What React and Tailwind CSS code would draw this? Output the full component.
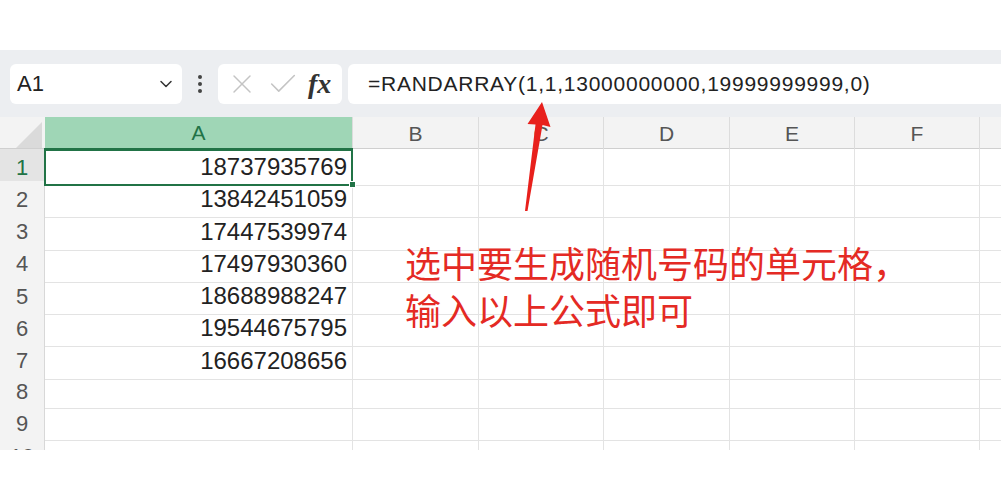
import { ChevronDown, X, Check } from 'lucide-react';

const rows = [
  '18737935769',
  '13842451059',
  '17447539974',
  '17497930360',
  '18688988247',
  '19544675795',
  '16667208656',
  '',
  '',
  '',
];

const columns = ['B', 'C', 'D', 'E', 'F', ''];

function Toolbar() {
  return (
    <div className="flex h-[67px] items-center bg-[#eceef1] pl-[10px]">
      <div className="flex h-[40px] w-[172px] items-center justify-between rounded-md bg-white pl-[7px] pr-[6px]">
        <span className="text-[22px] text-[#222]">A1</span>
        <ChevronDown size={20} strokeWidth={1.8} className="text-[#333]" />
      </div>
      <div className="flex w-[36px] flex-col items-center gap-[3px]">
        <span className="h-[4px] w-[4px] rounded-full bg-[#444]" />
        <span className="h-[4px] w-[4px] rounded-full bg-[#444]" />
        <span className="h-[4px] w-[4px] rounded-full bg-[#444]" />
      </div>
      <div className="flex h-[40px] w-[124px] items-center rounded-md bg-white pl-[8px]">
        <X size={32} strokeWidth={1.1} className="text-[#c4c4c4]" />
        <Check size={34} strokeWidth={1.1} className="ml-[8px] text-[#c4c4c4]" />
        <span className="ml-[8px] font-['Liberation_Serif',serif] text-[28px] font-bold italic leading-none text-[#333]">
          fx
        </span>
      </div>
      <div className="ml-[6px] flex h-[40px] flex-1 items-center rounded-l-md bg-white pl-[20px]">
        <span className="text-[21px] tracking-[0.75px] text-[#222]">
          =RANDARRAY(1,1,13000000000,19999999999,0)
        </span>
      </div>
    </div>
  );
}

function Sheet() {
  return (
    <div className="h-[333px] overflow-hidden">
      <div className="grid h-[32px] grid-cols-[45px_307px_126px_125px_126px_125px_125px_1fr] border-b border-[#cfcfcf] bg-[#f3f3f3]">
        <div className="relative">
          <div className="absolute bottom-[3px] right-[3px] h-0 w-0 border-b-[26px] border-l-[26px] border-b-[#dadada] border-l-transparent" />
        </div>
        <div className="flex items-center justify-center border-b-2 border-[#217346] bg-[#9fd6b6] text-[21px] text-[#217346]">
          A
        </div>
        {columns.map((c, i) => (
          <div
            key={i}
            className="flex items-center justify-center border-l border-[#dcdcdc] text-[21px] text-[#555]"
          >
            {c}
          </div>
        ))}
      </div>
      {rows.map((value, i) => (
        <div
          key={i}
          className="grid h-[32.3px] grid-cols-[45px_307px_126px_125px_126px_125px_125px_1fr]"
        >
          <div
            className={
              i === 0
                ? 'flex items-center justify-center border-b border-r border-[#d8d8d8] bg-[#e4e4e4] text-[22px] text-[#217346]'
                : 'flex items-center justify-center border-b border-r border-[#d8d8d8] bg-[#f3f3f3] text-[22px] text-[#555]'
            }
          >
            {i + 1}
          </div>
          <div className="relative flex items-center justify-end border-b border-[#e3e3e3] pr-[5px] text-[24px] text-[#222]">
            {value}
            {i === 0 ? (
              <>
                <div className="absolute inset-[-1px] border-2 border-[#217346]" />
                <div className="absolute bottom-[-3px] right-[-4px] h-[7px] w-[7px] border border-white bg-[#217346]" />
              </>
            ) : null}
          </div>
          {columns.map((c, j) => (
            <div key={j} className="border-b border-l border-[#e3e3e3]" />
          ))}
        </div>
      ))}
    </div>
  );
}

export default function App() {
  return (
    <div className="relative h-[500px] w-[1001px] overflow-hidden bg-white font-['Liberation_Sans',sans-serif]">
      <div className="h-[50px]" />
      <Toolbar />
      <Sheet />

      <svg className="absolute left-0 top-0" width="1001" height="500" viewBox="0 0 1001 500">
        <polygon
          points="542,102 550.5,127 542.5,125 527.5,211 525,211 535.5,124.5 527.5,124"
          fill="#e8201c"
        />
      </svg>

      <div className="absolute left-[405px] top-[239px] font-['Noto_Sans_CJK_SC',sans-serif] text-[36px] leading-[47px] text-[#e42a24]">
        <p>选中要生成随机号码的单元格，</p>
        <p>输入以上公式即可</p>
      </div>
    </div>
  );
}
